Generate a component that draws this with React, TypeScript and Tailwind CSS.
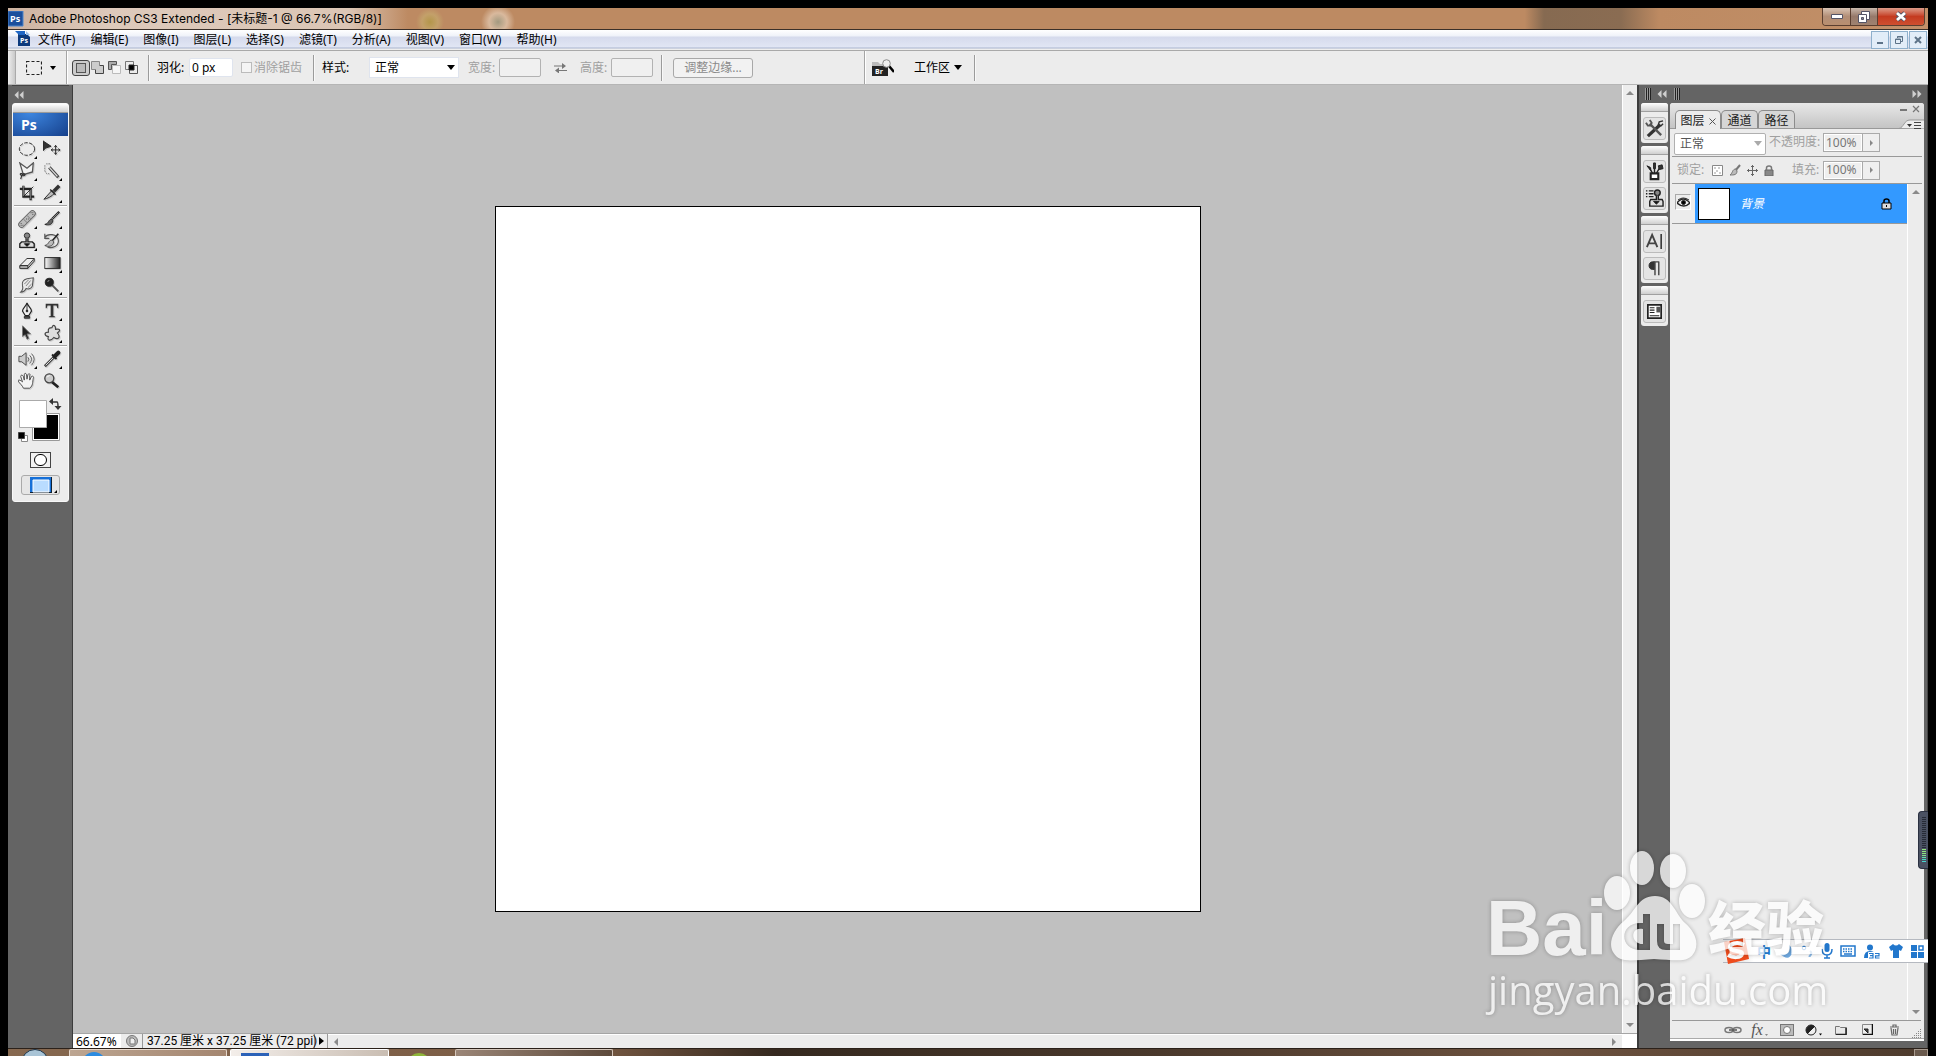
import React from 'react';

const UI_FONT = "font-['Noto_Sans','Noto_Sans_CJK_SC',sans-serif]";

const MENUS = ['文件(F)', '编辑(E)', '图像(I)', '图层(L)', '选择(S)', '滤镜(T)', '分析(A)', '视图(V)', '窗口(W)', '帮助(H)'];

interface IconProps {
  children: React.ReactNode;
  className?: string;
  box?: string;
}

function Icon({ children, className = 'h-5 w-5', box = '0 0 20 20' }: IconProps) {
  return (
    <svg viewBox={box} className={`shrink-0 ${className}`} fill="none" stroke="#222" strokeWidth="1" aria-hidden="true">
      {children}
    </svg>
  );
}

function DoubleArrow({ right = false }: { right?: boolean }) {
  return (
    <Icon box="0 0 10 8" className={right ? 'h-2 w-2.5 rotate-180' : 'h-2 w-2.5'}>
      <path d="M4.500 0v8L0.500 4zM9.500 0v8L5.500 4z" fill="#cfcfcf" stroke="none" />
    </Icon>
  );
}

function Grip() {
  return (
    <span className="flex h-3">
      <i className="w-px bg-[#999]" /><i className="w-px bg-[#222]" />
      <i className="w-px bg-[#999]" /><i className="w-px bg-[#222]" />
      <i className="w-px bg-[#999]" /><i className="w-px bg-[#222]" />
    </span>
  );
}

function Caret({ className = 'text-black' }: { className?: string }) {
  return (
    <svg viewBox="0 0 8 5" className={`h-[5px] w-2 shrink-0 ${className}`} aria-hidden="true">
      <path d="M0 0h8L4 5z" fill="currentColor" />
    </svg>
  );
}

/* ---------- toolbox ---------- */

const TOOL_GROUPS: { name: string; corner?: boolean; art: React.ReactNode }[][] = [
  [
    { name: '椭圆选框工具', corner: true, art: <ellipse cx="10" cy="10" rx="8.500" ry="7" strokeDasharray="4 1.500" /> },
    {
      name: '移动工具',
      art: (
        <>
          <path d="M0 1v11l3-3 6-2z" fill="#333" />
          <path d="M14 6v10M9 11h10M12.500 8L14 6l1.500 2M12.500 14l1.500 2 1.500-2M11 9.500L9 11l2 1.500M17 9.500l2 1.500-2 1.500" />
        </>
      ),
    },
    {
      name: '多边形套索工具',
      corner: true,
      art: (
        <>
          <path d="M2 1l8 6 7-6-1 10-10 3z" fill="#f2f2f2" stroke="#555" strokeWidth="1.400" />
          <path d="M6 14c-3-3-5 0-2 1s5-1 3-2-3 2-4 6" stroke="#333" strokeWidth="1.300" />
        </>
      ),
    },
    {
      name: '快速选择工具',
      corner: true,
      art: (
        <>
          <path d="M8 2H4L2 4v6l2 3h3" strokeDasharray="2 1" stroke="#777" />
          <path d="M7 6l10 11" stroke="#444" strokeWidth="3.500" />
          <path d="M7 6l9 10" stroke="#ddd" strokeWidth="1.500" />
        </>
      ),
    },
    {
      name: '裁剪工具',
      art: (
        <>
          <path d="M6 2v12h12M2 5.500h12V18" strokeWidth="2.500" />
          <path d="M6 2v11.500M14 6v11" stroke="#999" strokeWidth="0.800" />
          <path d="M6 14L17 3" />
        </>
      ),
    },
    {
      name: '切片工具',
      corner: true,
      art: (
        <>
          <path d="M18 2l-6 6" stroke="#333" strokeWidth="4" />
          <path d="M1 17L10 7l3 3c-3 4-8 6-12 7z" fill="#bbb" />
          <path d="M8 6l6 6" strokeWidth="1.500" />
        </>
      ),
    },
  ],
  [
    {
      name: '污点修复画笔工具',
      corner: true,
      art: (
        <>
          <path d="M4 16L16 4" stroke="#666" strokeWidth="7.500" strokeLinecap="round" />
          <path d="M4 16L16 4" stroke="#bbb" strokeWidth="5.500" strokeLinecap="round" />
          <path d="M6 10l4 4M10 6l4 4" stroke="#777" />
          <path d="M3 15h1M5 17h1M14 3h1M16 5h1M9 10h1M11 10h1M3 17h1M16 3h1" stroke="#444" />
        </>
      ),
    },
    {
      name: '画笔工具',
      corner: true,
      art: (
        <>
          <path d="M18 2l-8 8" strokeWidth="2.500" />
          <path d="M17 3l-7 7" stroke="#aaa" strokeWidth="0.800" />
          <path d="M10 10c-4 0-3 5-8 6 4 1 8 1 9-4z" fill="#666" />
        </>
      ),
    },
    {
      name: '仿制图章工具',
      corner: true,
      art: (
        <>
          <circle cx="10" cy="4" r="3" fill="#888" />
          <path d="M9 7v4H4L2 13v4h16v-4l-2-2h-5V7" fill="#ddd" strokeWidth="1.500" />
          <path d="M7 13h6l-3 3z" fill="#111" />
        </>
      ),
    },
    {
      name: '历史记录画笔工具',
      corner: true,
      art: (
        <>
          <path d="M2 2v5h5M2 6c3-5 14-4 15 3s-7 9-12 8" stroke="#555" strokeWidth="1.300" />
          <path d="M17 2l-7 8" strokeWidth="1.800" />
          <path d="M10 9c-4 0-3 5-8 6 4 2 9 1 10-4z" fill="#bbb" stroke="#444" />
        </>
      ),
    },
    {
      name: '橡皮擦工具',
      corner: true,
      art: (
        <>
          <path d="M2 13L10 5h8l-7 8z" fill="#eee" />
          <path d="M2 13v3h9v-3zM11 16l7-8V5" fill="#bbb" />
        </>
      ),
    },
    {
      name: '渐变工具',
      corner: true,
      art: (
        <>
          <defs>
            <linearGradient id="toolGradient">
              <stop offset="0" stopColor="#fff" />
              <stop offset="1" stopColor="#222" />
            </linearGradient>
          </defs>
          <rect x="2" y="4" width="17" height="12" fill="url(#toolGradient)" />
        </>
      ),
    },
    {
      name: '涂抹工具',
      corner: true,
      art: (
        <>
          <path d="M3 18c2-2 3-4 2-7-1-4 1-7 5-8l7-1-1 9c-1 3-4 4-7 3-1 2-3 4-6 4z" fill="#e8e8e8" stroke="#555" strokeWidth="1.200" />
          <path d="M7 9l5-5M9 11l5-6M11 13l4-4" stroke="#777" />
        </>
      ),
    },
    {
      name: '加深工具',
      corner: true,
      art: (
        <>
          <path d="M10 10l7 7" stroke="#555" strokeWidth="2" />
          <circle cx="7" cy="7" r="4.500" fill="#222" />
          <path d="M5 6l2-1" stroke="#aaa" />
        </>
      ),
    },
  ],
  [
    {
      name: '钢笔工具',
      corner: true,
      art: (
        <>
          <path d="M10 1c-1 4-5 6-5 9l3 5h4l3-5c0-3-4-5-5-9z" fill="#eee" strokeWidth="1.300" />
          <path d="M10 2v8" />
          <circle cx="10" cy="10" r="1" fill="#222" />
          <path d="M7 16h6v2H7z" fill="#555" />
        </>
      ),
    },
    {
      name: '横排文字工具',
      corner: true,
      art: <path d="M3 2h14v5h-1l-1-3h-3.500v11.500l2 .5v1h-7v-1l2-.5V4H5L4 7H3z" fill="#333" stroke="none" />,
    },
    {
      name: '路径选择工具',
      corner: true,
      art: <path d="M5 2v12l3-2 2 5 2-1-2-5h4z" fill="#222" stroke="#777" />,
    },
    {
      name: '自定形状工具',
      corner: true,
      art: (
        <path
          d="M10 4c1-4 4-3 4 2 5-1 6 1 2 4 4 5 1 8-4 5-3 4-8 4-6-1-5-1-5-5 0-5-1-5 2-5 4-5z"
          fill="#ddd"
          stroke="#444"
          strokeWidth="1.300"
        />
      ),
    },
  ],
  [
    {
      name: '语音注释工具',
      corner: true,
      art: (
        <>
          <path d="M1 7h3l5-4v14l-5-4H1z" fill="#ccc" stroke="#444" />
          <path d="M11 8q2 2 0 5M13 6q4 4 0 9M15 4q6 6 0 13" stroke="#555" />
        </>
      ),
    },
    {
      name: '吸管工具',
      corner: true,
      art: (
        <>
          <path d="M2 18L12 8" strokeWidth="3" stroke="#444" />
          <path d="M3 17l9-9" stroke="#eee" />
          <path d="M10 5l5 5" strokeWidth="2" />
          <path d="M13 7l4-4" strokeWidth="4.500" strokeLinecap="round" />
        </>
      ),
    },
    {
      name: '抓手工具',
      art: (
        <path
          d="M6 18c-1-3-4-5-6-8 0-2 3-1 5 1L3 5c0-2 2-2 3 0l1 4V3c0-2 2-2 2.500 0L10 8l1-5c1-2 3-1 2 1v5l2-4c1-1 3 0 2 2-1 4 0 8-4 11z"
          fill="#f4f4f4"
          stroke="#444"
        />
      ),
    },
    {
      name: '缩放工具',
      art: (
        <>
          <path d="M10 11l7 6" strokeWidth="3" />
          <circle cx="7" cy="7" r="5" fill="#ccc" stroke="#444" strokeWidth="1.500" />
          <path d="M4.500 6q1-2 3-2" stroke="#fff" />
        </>
      ),
    },
  ],
];

function Corner() {
  return (
    <svg viewBox="0 0 3 3" className="absolute right-0.5 bottom-px h-[3px] w-[3px]" aria-hidden="true">
      <path d="M3 0v3H0z" fill="#000" />
    </svg>
  );
}

function Toolbox() {
  return (
    <aside className="flex w-[65px] shrink-0 flex-col border-r border-[#3c3c3c] bg-[#646464] pr-[3px] pl-1">
      <div className="flex h-[18px] items-center border-t border-[#444] px-0.5"><DoubleArrow /></div>
      <div className="rounded-[3px] border border-[#f8f8f8] bg-[#ececec] pb-1.5">
        <div className="h-[9px] border-b border-[#9a9a9a] bg-linear-to-b from-white to-[#cfcfcf]" />
        <div className="h-[23px] bg-[radial-gradient(ellipse_at_30%_0%,#3d86e0,#16408b)] pl-2 font-['Open_Sans',sans-serif] text-sm leading-[23px] font-bold text-white">Ps</div>
        <div className="flex flex-col px-px pt-0.5">
          {TOOL_GROUPS.map((group, i) => (
            <div key={i}>
              {i > 0 && <div className="my-px h-0.5 border-b border-white bg-[#a3a3a3]" />}
              <div className="grid grid-cols-[25px_25px]">
                {group.map((tool) => (
                  <button key={tool.name} type="button" aria-label={tool.name} className="relative flex h-[22px] items-center justify-center">
                    <Icon className="h-[18px] w-[18px] drop-shadow-[1px_1px_0px_#cccccc]">{tool.art}</Icon>
                    {tool.corner && <Corner />}
                  </button>
                ))}
              </div>
            </div>
          ))}
        </div>
        <svg viewBox="0 0 54 52" className="mt-1.5 h-[52px] w-[54px]" aria-hidden="true">
          <path d="M19.500 15.500h27v27h-27z" fill="#fff" stroke="#999" />
          <path d="M21 17h24v24H21z" fill="#000" />
          <path d="M6.500 2.500h27v27h-27z" fill="#fff" stroke="#aaa" />
          <path d="M39 4h5q1 0 1 5" fill="none" stroke="#333" strokeWidth="1.500" />
          <path d="M40 0v7l-4-3.500zM41.500 8h7L45 12z" fill="#333" />
          <path d="M8.500 37.500h6v6h-6z" fill="#fff" stroke="#888" />
          <path d="M5.500 34.500h6v6h-6z" fill="#000" stroke="#444" />
        </svg>
        <div className="mt-0.5 flex flex-col items-center gap-[7px]">
          <button type="button" aria-label="快速蒙版" className="flex h-4 w-[21px] items-center justify-center border border-[#444] bg-[#f2f2f2]">
            <span className="h-3 w-[13px] rounded-full border border-black bg-white" />
          </button>
          <button type="button" aria-label="屏幕模式" className="relative flex h-5 w-[39px] items-center justify-center rounded-[3px] border border-[#aaa] bg-[#e6e6e6]">
            <Icon box="0 0 22 16" className="h-4 w-[22px]">
              <path d="M0 0h22v16H0z" fill="#1670d8" stroke="none" />
              <path d="M0 15.500h22M21.500 0v16" stroke="#123" />
              <path d="M3 3h16v12H3z" fill="#b9dcff" stroke="#fff" />
            </Icon>
            <Corner />
          </button>
        </div>
      </div>
    </aside>
  );
}

/* ---------- top bars ---------- */

function TitleBar() {
  return (
    <header className="flex h-[22px] shrink-0 border-b border-[#3b3029] bg-[radial-gradient(circle_at_490px_14px,#a39a80_0px,#d9b99d_9px,transparent_17px),radial-gradient(circle_at_422px_14px,#b3964a_0px,#c3a06a_8px,transparent_14px),linear-gradient(90deg,#cdb29f_0px,#ddc9bb_100px,#dcc6b5_340px,#bd8a62_400px,#bd8a62_79%,#866a51_80%,#8a6c52_84%,#bd8a62_86%,#c29069_100%)]">
      <Icon box="0 0 16 16" className="mt-[3px] h-4 w-4">
        <path d="M0 0h15v15H0z" fill="#1b4f9c" stroke="#4d86cd" />
        <text x="2" y="11" fontSize="9" fontWeight="bold" fill="#fff" stroke="none" fontFamily="Open Sans">Ps</text>
      </Icon>
      <h1 className="flex-1 pt-px pl-[5px] font-['Inter','Noto_Sans_CJK_SC',sans-serif] text-[12px] leading-5 text-black">
        Adobe Photoshop CS3 Extended - [未标题-1 @ 66.7%(RGB/8)]
      </h1>
      <div className="mr-[3px] flex h-[18px] overflow-hidden rounded-b-[4px] border border-t-0 border-[#5b3f30] text-white">
        <button type="button" aria-label="最小化" className="flex w-7 items-center justify-center border-r border-[#5b3f30] bg-linear-to-b from-[#d9c4b4] via-[#b28e76] to-[#b98f70]">
          <Icon box="0 0 12 6" className="h-1.5 w-3"><path d="M.5.500h11v4H.5z" fill="#fff" stroke="#556" /></Icon>
        </button>
        <button type="button" aria-label="还原" className="flex w-[27px] items-center justify-center border-r border-[#5b3f30] bg-linear-to-b from-[#c9b8ac] via-[#96796a] to-[#a08370]">
          <Icon box="0 0 12 12" className="h-3 w-3">
            <path d="M3.500.500h8v8h-8z" fill="#fff" stroke="#556" />
            <path d="M.5 3.500h8v8h-8z" fill="#fff" stroke="#556" />
            <path d="M3.500 6.500h2v2h-2z" fill="#889" stroke="#556" />
          </Icon>
        </button>
        <button type="button" aria-label="关闭" className="flex w-[46px] items-center justify-center bg-linear-to-b from-[#dc9a88] via-[#c43a20] to-[#cf5030]">
          <Icon box="0 0 12 11" className="h-[11px] w-3">
            <path d="M2 2l8 7M10 2l-8 7" stroke="#556" strokeWidth="4.500" />
            <path d="M2 2l8 7M10 2l-8 7" stroke="#fff" strokeWidth="2.800" />
          </Icon>
        </button>
      </div>
    </header>
  );
}

function MenuBar() {
  const mdi = 'flex h-[18px] w-[18px] items-center justify-center border border-[#8fb0cc] bg-[#e2edf8]';
  return (
    <nav className="flex h-[21px] shrink-0 items-start border-b border-[#a9a9a9] bg-[linear-gradient(#ffffff_0px,#eff2f9_6px,#d5daec_7px,#e1e6f4_17px,#a9b4ce_18px,#eeeeee_19px)]">
      <Icon box="0 0 16 16" className="mt-px ml-[7px] h-4 w-4">
        <path d="M3 3h9l3 3v9H3z" fill="#0d3a7c" stroke="none" />
        <path d="M0 0h10v4H4z" fill="#1f66c4" stroke="none" />
        <path d="M11 0l4 4h-4z" fill="#9cc0ea" stroke="none" />
        <text x="5" y="12" fontSize="7" fontWeight="bold" fill="#fff" stroke="none" fontFamily="Open Sans">Ps</text>
      </Icon>
      <div className="flex flex-1 gap-[15px] pt-px pl-[7px]">
        {MENUS.map((menu) => (
          <button key={menu} type="button" className="text-[12px] leading-[18px] whitespace-nowrap text-black">{menu}</button>
        ))}
      </div>
      <div className="mt-px mr-px flex gap-px">
        <button type="button" aria-label="最小化文档" className={mdi}><span className="mt-1.5 h-0.5 w-1.5 bg-[#5d7388]" /></button>
        <button type="button" aria-label="还原文档" className={mdi}>
          <Icon box="0 0 8 8" className="h-2 w-2"><path d="M2.500 2V.500h5v5H6M.5 3h5v4.500h-5z" stroke="#5d7388" /><path d="M2 1h6M0 3.500h6" stroke="#5d7388" /></Icon>
        </button>
        <button type="button" aria-label="关闭文档" className={mdi}>
          <Icon box="0 0 8 8" className="h-2 w-2"><path d="M1 1l6 6M7 1L1 7" stroke="#5d7388" strokeWidth="2" /></Icon>
        </button>
      </div>
    </nav>
  );
}

function Divider() {
  return <span className="h-[26px] w-0.5 shrink-0 border-l border-[#9b9b9b] bg-[#f8f8f8]" />;
}

function OptionsBar() {
  return (
    <section className="flex h-[34px] shrink-0 items-center border-b border-[#b5b5b5] bg-[#ececec] text-[12px] text-black">
      <span className="h-full w-2 border-r border-[#aaa] bg-linear-to-r from-[#eee] to-[#c9c9c9]" />
      <button type="button" aria-label="矩形选框工具" className="ml-2.5 flex items-center gap-2">
        <Icon box="0 0 16 14" className="h-[14px] w-4"><path d="M.5.500h15v13H.5z" strokeDasharray="3 2" strokeWidth="1.200" /></Icon>
        <svg viewBox="0 0 6 4" className="h-1 w-1.5" aria-hidden="true"><path d="M0 0h6L3 4z" /></svg>
      </button>
      <span className="ml-2.5 h-full w-0.5 border-l border-[#a5a5a5] bg-white" />
      <button type="button" aria-label="新选区" className="mr-px ml-1 flex h-4 w-[18px] items-center justify-center rounded-[3px] border border-[#444] bg-[#ccc]">
        <span className="h-2.5 w-2.5 border border-[#555] bg-[#bbb]" />
      </button>
      <div className="flex items-center gap-1">
        <button type="button" aria-label="添加到选区">
          <Icon box="0 0 13 13" className="h-[13px] w-[13px]"><path d="M4.500 4.500h8v8h-8z" fill="#ccc" stroke="#444" /><path d="M.5.500h8v8h-8z" fill="#ccc" stroke="#888" /><path d="M5 5h4v4H5z" fill="#ccc" stroke="none" /></Icon>
        </button>
        <button type="button" aria-label="从选区减去">
          <Icon box="0 0 13 13" className="h-[13px] w-[13px]"><path d="M.5.500h8v3h-5v5h-3z" fill="#aaa" stroke="#555" /><path d="M4.500 4.500h8v8h-8z" fill="#f6f6f6" stroke="#bbb" /></Icon>
        </button>
        <button type="button" aria-label="与选区交叉">
          <Icon box="0 0 13 13" className="h-[13px] w-[13px]"><path d="M.5.500h8v8h-8z" stroke="#777" /><path d="M4.500 4.500h8v8h-8z" stroke="#555" /><path d="M4 4h5v5H4z" fill="#000" /></Icon>
        </button>
      </div>
      <span className="w-2.5" />
      <Divider />
      <label htmlFor="feather" className="ml-[7px] w-8">羽化:</label>
      <input id="feather" defaultValue="0 px" className="h-[19px] w-11 rounded-[2px] border border-[#dfe4ee] bg-white px-0.5 text-[12px]" />
      <input id="antialias" type="checkbox" disabled className="ml-2 h-[11px] w-[11px] appearance-none border border-[#bbb] bg-[#f4f4f4]" />
      <label htmlFor="antialias" className="ml-0.5 w-[49px] whitespace-nowrap text-[#a0a0a0]">消除锯齿</label>
      <span className="w-2.5" />
      <Divider />
      <label htmlFor="style" className="ml-[7px] w-[47px]">样式:</label>
      <span className="relative">
        <select id="style" className="h-[21px] w-[90px] appearance-none border border-[#dfe4ee] bg-white px-[5px] text-[12px]">
          <option>正常</option>
        </select>
        <span className="pointer-events-none absolute top-2 right-1"><Caret /></span>
      </span>
      <label htmlFor="optWidth" className="ml-[9px] w-[31px] text-[#a0a0a0]">宽度:</label>
      <input id="optWidth" disabled className="h-[19px] w-[42px] rounded-[2px] border border-[#b2b2b2] bg-[#f0f0f0]" />
      <button type="button" aria-label="高度和宽度互换" className="mx-[13px]">
        <Icon box="0 0 13 10" className="h-2.5 w-[13px]"><path d="M0 3h9M4 7.500h9" stroke="#777" strokeWidth="1.200" /><path d="M8 0v6l4-3zM5 4.500v6l-4-3z" fill="#777" stroke="none" /></Icon>
      </button>
      <label htmlFor="optHeight" className="w-[31px] text-[#a0a0a0]">高度:</label>
      <input id="optHeight" disabled className="h-[19px] w-[42px] rounded-[2px] border border-[#b2b2b2] bg-[#f0f0f0]" />
      <span className="w-2" />
      <Divider />
      <button type="button" className="ml-2.5 h-5 w-20 rounded-[3px] border border-[#a8a8a8] bg-[#f2f2f2] leading-4 text-[#8a8a8a]">调整边缘...</button>
      <span className="ml-[111px] h-full w-0.5 border-l border-[#a5a5a5] bg-white" />
      <button type="button" aria-label="转到 Bridge" className="ml-1.5">
        <Icon box="0 0 22 18" className="h-[18px] w-[22px]">
          <path d="M0 3h6l2 2h8v3H0z" fill="#bbb" stroke="none" />
          <path d="M0 7h16v10H0z" fill="#222" stroke="none" />
          <text x="3" y="15" fontSize="7" fontWeight="bold" fill="#fff" stroke="none" fontFamily="Open Sans">Br</text>
          <path d="M17 7l5 6" strokeWidth="2.500" stroke="#000" />
          <circle cx="14.500" cy="4.500" r="3.800" fill="#eee" stroke="#888" />
        </Icon>
      </button>
      <button type="button" className="mr-3 ml-5 flex items-center gap-1">工作区<Caret /></button>
      <Divider />
    </section>
  );
}

/* ---------- document ---------- */

function SmallArrow({ dir }: { dir: 'up' | 'down' | 'left' | 'right' }) {
  const paths = { up: 'M0 6l4-4 4 4z', down: 'M0 2l4 4 4-4z', left: 'M6 0L2 4l4 4z', right: 'M2 0l4 4-4 4z' };
  return (
    <svg viewBox="0 0 8 8" className="h-2 w-2 shrink-0" aria-hidden="true">
      <path d={paths[dir]} fill="#8a8a8a" />
    </svg>
  );
}

function DocumentArea() {
  return (
    <main className="flex min-w-0 flex-1 flex-col">
      <div className="flex min-h-0 flex-1">
        <div className="flex min-w-0 flex-1 items-center justify-center bg-[#c0c0c0]">
          <div className="aspect-square h-[706px] border border-black bg-white" />
        </div>
        <div className="flex w-[15px] flex-col items-center justify-between border-l border-white bg-[#ededed] py-1">
          <SmallArrow dir="up" />
          <SmallArrow dir="down" />
        </div>
      </div>
      <div className="flex h-[15px] shrink-0 border-t border-[#a5a5a5] bg-[#ececec] text-[12px] leading-[15px] text-black">
        <input aria-label="缩放比例" defaultValue="66.67%" className="w-12 bg-white pl-[3px] text-[12px]" />
        <span className="flex w-[22px] items-center justify-center border-r border-[#999]">
          <Icon box="0 0 12 12" className="h-3 w-3"><circle cx="6" cy="6" r="5.500" fill="#bbb" stroke="#777" /><path d="M4 3h3l2 2v4H4z" fill="#eee" stroke="#777" /></Icon>
        </span>
        <span className="w-[172px] border-r border-[#999] pl-1 font-['Roboto','Noto_Sans_CJK_SC',sans-serif] text-[12px] whitespace-nowrap">
          37.25 厘米 x 37.25 厘米 (72 ppi)
        </span>
        <button type="button" aria-label="状态栏选项" className="flex w-[13px] items-center justify-center border-r border-[#999]">
          <svg viewBox="0 0 5 8" className="h-2 w-[5px]" aria-hidden="true"><path d="M0 0l5 4-5 4z" /></svg>
        </button>
        <span className="flex flex-1 items-center justify-between border-t border-white px-1">
          <SmallArrow dir="left" />
          <SmallArrow dir="right" />
        </span>
        <span className="w-[15px] bg-white" />
      </div>
    </main>
  );
}

/* ---------- right dock ---------- */

const DOCK_GROUPS: { name: string; art: React.ReactNode }[][] = [
  [
    {
      name: '工具预设',
      art: (
        <>
          <path d="M3 18L16 6" strokeWidth="3.500" stroke="#333" />
          <path d="M19 2l-4 1-1 3 3 1 2-2" strokeWidth="1.500" stroke="#333" />
          <path d="M5 5l12 12" stroke="#555" strokeWidth="2.500" />
          <path d="M1 4l2 3h3l1-3-2-3" stroke="#555" strokeWidth="2" />
        </>
      ),
    },
  ],
  [
    {
      name: '画笔',
      art: (
        <>
          <path d="M6 12h8v6H6z" fill="#fff" strokeWidth="2.200" />
          <path d="M8 12L4 5M10 12V5M12 12l4-7" strokeWidth="1.500" />
          <path d="M2 4l4 2v3zM9 1h2v6H9zM14 4l4-1 1 4-4 1z" fill="#333" />
        </>
      ),
    },
    {
      name: '仿制源',
      art: (
        <>
          <circle cx="13" cy="4" r="3" fill="#888" strokeWidth="1.500" />
          <path d="M12 7v4H6l-1 2v5h14v-5l-1-2h-4V7" fill="#ddd" strokeWidth="1.500" />
          <path d="M9 13h6l-3 3z" fill="#111" />
          <path d="M1 2h1.500M4 2h5M1 5h1.500M4 5h5M1 8h1.500M4 8h5" strokeWidth="1.500" />
        </>
      ),
    },
  ],
  [
    {
      name: '字符',
      art: (
        <>
          <path d="M2 16L7.500 3 13 16M4 12h7" strokeWidth="2" stroke="#444" />
          <path d="M17 2v16" strokeWidth="1.500" />
        </>
      ),
    },
    {
      name: '段落',
      art: (
        <>
          <path d="M10 3H8C3 3 3 11 8 11h2z" fill="#333" stroke="#333" />
          <path d="M9 3h6M10.500 3v14M14.500 3v14" strokeWidth="1.500" stroke="#444" />
        </>
      ),
    },
  ],
  [
    {
      name: '图层复合',
      art: (
        <>
          <path d="M3 3h14v14H3z" fill="#fff" strokeWidth="1.800" />
          <path d="M5 6h5M5 8.500h5M5 11h5M5 14.500h10" strokeWidth="1.200" />
          <path d="M12 5h4v6h-4z" fill="#555" stroke="none" />
        </>
      ),
    },
  ],
];

function Dock() {
  return (
    <aside className="w-[33px] shrink-0 border-l-2 border-[#3c3c3c] bg-[#646464] px-0.5">
      <div className="flex h-[18px] items-center gap-1.5 pl-1"><Grip /><DoubleArrow /></div>
      <div className="flex flex-col gap-[3px]">
        {DOCK_GROUPS.map((group, i) => (
          <div key={i} className="rounded-[3px] bg-[#ececec] pb-[3px]">
            <div className="h-[9px] rounded-t-[3px] border-b border-[#a0a0a0] bg-linear-to-b from-white to-[#cfcfcf]" />
            <div className="flex flex-col items-center gap-1 pt-[5px]">
              {group.map((item) => (
                <button key={item.name} type="button" aria-label={item.name} className="flex h-[23px] w-[23px] items-center justify-center rounded-[3px] border border-[#bbb] bg-[#e4e4e4]">
                  <Icon className="h-[19px] w-[19px]">{item.art}</Icon>
                </button>
              ))}
            </div>
          </div>
        ))}
      </div>
    </aside>
  );
}

function PercentField({ id }: { id: string }) {
  return (
    <span className="flex h-[19px] w-[57px] border border-[#aaa] bg-[#efefef]">
      <input id={id} defaultValue="100%" className="w-[38px] border border-white pl-px text-[12px] text-[#777]" />
      <button type="button" aria-label="调整数值" className="flex flex-1 items-center justify-center border-l border-[#aaa]">
        <svg viewBox="0 0 3 6" className="h-1.5 w-[3px]" aria-hidden="true"><path d="M0 0l3 3-3 3z" fill="#888" /></svg>
      </button>
    </span>
  );
}

function LayersPanel() {
  const tab = 'flex h-[18px] items-center justify-center rounded-t-[5px] border border-b-0 border-[#8c8c8c] pt-0.5 text-[12px] text-[#222]';
  const action = 'flex w-[27px] items-center justify-center';
  return (
    <aside className="flex w-[258px] shrink-0 flex-col border-r border-[#444] bg-[#646464] pr-[3px] pb-[7px] text-[12px]">
      <div className="flex h-[18px] items-center justify-between pr-0.5 pl-1"><Grip /><DoubleArrow right /></div>
      <div className="flex min-h-0 flex-1 flex-col rounded-t-[3px] bg-[#ececec]">
        <div className="flex h-[26px] shrink-0 items-end rounded-t-[3px] border-b border-[#999] bg-linear-to-b from-[#e8e8e8] to-[#c4c4c4] pl-[5px]">
          <button type="button" className={`${tab} -mb-px h-[19px] w-[46px] gap-1 bg-[#ececec]`}>
            图层
            <Icon box="0 0 7 7" className="h-[7px] w-[7px]"><path d="M.5.500l6 6M6.500.500l-6 6" stroke="#555" /></Icon>
          </button>
          <button type="button" className={`${tab} w-[37px] bg-[#d6d6d6]`}>通道</button>
          <button type="button" className={`${tab} w-[37px] bg-[#d6d6d6]`}>路径</button>
          <svg viewBox="0 0 34 26" className="-mb-px ml-auto h-[26px] w-[34px]" aria-hidden="true">
            <path d="M9 25.500c5-1 5-8.500 11-8.500h15v9z" fill="#ececec" stroke="#999" />
            <path d="M5 25.500h4" stroke="#999" />
            <path d="M10 7h7" stroke="#777" strokeWidth="2" />
            <path d="M23 3l6 6M29 3l-6 6" stroke="#777" strokeWidth="1.200" />
            <path d="M17 21h5l-2.500 3z" fill="#333" />
            <path d="M24 19.500h7M24 22.500h7M24 25.500h7" stroke="#444" />
          </svg>
        </div>
        <div className="mx-0.5 flex h-7 shrink-0 items-start border-b border-[#999] pt-1">
          <span className="relative mr-[3px] ml-0.5">
            <select aria-label="混合模式" className="h-[22px] w-[92px] appearance-none rounded-[2px] border border-[#b0b0b0] bg-white px-[5px] text-[12px] text-[#555]">
              <option>正常</option>
            </select>
            <span className="pointer-events-none absolute top-2 right-1"><Caret className="text-[#aaa]" /></span>
          </span>
          <label htmlFor="opacity" className="w-[54px] whitespace-nowrap text-[#a0a0a0]">不透明度:</label>
          <PercentField id="opacity" />
        </div>
        <div className="mx-0.5 flex h-[27px] shrink-0 items-center border-b border-[#999] pl-[5px]">
          <span className="w-[35px] text-[#a0a0a0]">锁定:</span>
          <div className="flex w-20 items-center gap-1.5">
            <button type="button" aria-label="锁定透明像素">
              <Icon box="0 0 11 11" className="h-[11px] w-[11px]"><path d="M.5.500h10v10H.5z" fill="#fff" stroke="#888" /><path d="M2 2h2v2H2zM6 2h2v2H6zM4 5h2v2H4zM2 7h2v2H2zM7 7h2v2H7z" fill="#ccc" stroke="none" /></Icon>
            </button>
            <button type="button" aria-label="锁定图像像素">
              <Icon box="0 0 12 12" className="h-3 w-3"><path d="M11 1L6 7" stroke="#777" strokeWidth="2" /><path d="M7 5c-4 0-3 4-6 6 4 0 7 0 7-4z" fill="#bbb" stroke="#777" /></Icon>
            </button>
            <button type="button" aria-label="锁定位置">
              <Icon box="0 0 11 11" className="h-[11px] w-[11px]"><path d="M5.500 0v11M0 5.500h11M4 2l1.500-1.500L7 2M4 9l1.500 1.500L7 9M2 4L.500 5.500 2 7M9 4l1.500 1.500L9 7" stroke="#666" /></Icon>
            </button>
            <button type="button" aria-label="锁定全部">
              <Icon box="0 0 10 11" className="h-[11px] w-2.5"><path d="M1 5h8v6H1z" fill="#888" stroke="#666" /><path d="M2.500 5V3q0-2 2.500-2t2.500 2v2" stroke="#777" strokeWidth="1.500" /></Icon>
            </button>
          </div>
          <label htmlFor="fill" className="w-[31px] text-[#a0a0a0]">填充:</label>
          <PercentField id="fill" />
        </div>
        <div className="ml-0.5 flex min-h-0 flex-1">
          <ul className="min-w-0 flex-1">
            <li className="flex h-10 border-b border-[#999]">
              <button type="button" aria-label="图层可见性" className="mt-2.5 mr-1 ml-[3px] flex h-4 w-4 items-center justify-center border border-[#aaa] border-r-white border-b-white">
                <Icon box="0 0 13 10" className="h-2.5 w-[13px]"><path d="M0 6q6-8 13 0-6 6-13 0z" fill="#eee" strokeWidth="1.500" /><circle cx="6.500" cy="5.500" r="2" fill="#000" /><path d="M1 3q5-4 11 0" /></Icon>
              </button>
              <div className="flex flex-1 items-center bg-[#3399ff] pr-[15px] pl-[3px] text-white">
                <span className="h-8 w-8 border border-black bg-white" />
                <span className="flex-1 pl-2.5 italic">背景</span>
                <Icon box="0 0 11 12" className="h-3 w-[11px]"><path d="M1 5h9v6H1z" fill="#ddd" stroke="#000" /><path d="M3 5V3q0-2 2.500-2T8 3v2" stroke="#000" strokeWidth="1.500" /><path d="M5.500 7v2" stroke="#000" /></Icon>
              </div>
            </li>
          </ul>
          <div className="flex w-[17px] flex-col items-center justify-between border-l border-white py-1"><SmallArrow dir="up" /><SmallArrow dir="down" /></div>
        </div>
        <div className="mr-[3px] ml-0.5 flex h-[18px] shrink-0 items-center justify-end border-t border-[#999] text-[#555]">
          <button type="button" aria-label="链接图层" className={action}>
            <Icon box="0 0 18 8" className="h-2 w-[18px]"><ellipse cx="5" cy="4" rx="4" ry="2.500" stroke="#777" strokeWidth="1.500" /><ellipse cx="13" cy="4" rx="4" ry="2.500" stroke="#777" strokeWidth="1.500" /><path d="M5 4h8" stroke="#555" strokeWidth="1.500" /></Icon>
          </button>
          <button type="button" className={`${action} items-end font-['Liberation_Serif',serif] text-[16px] leading-4 italic`}>
            fx
            <Icon box="0 0 3 2" className="mb-0.5 ml-0.5 h-0.5 w-[3px]"><path d="M0 0h3L1.500 2z" fill="#888" stroke="none" /></Icon>
          </button>
          <button type="button" aria-label="添加蒙版" className={action}>
            <span className="flex h-3 w-3.5 items-center justify-center border border-[#777] bg-[#bbb]"><span className="h-2 w-2 rounded-full border border-[#777] bg-white" /></span>
          </button>
          <button type="button" aria-label="调整图层" className={action}>
            <Icon box="0 0 17 12" className="h-3 w-[17px]"><circle cx="6" cy="6" r="5" fill="#eee" /><path d="M2.500 9.500A5 5 0 0 1 9.500 2.500z" fill="#222" /><path d="M14 9.500h3l-1.500 2z" fill="#000" stroke="none" /></Icon>
          </button>
          <button type="button" aria-label="新建组" className={action}>
            <Icon box="0 0 12 10" className="h-2.5 w-3"><path d="M.5 1.500h4l1 1h6v7H.5z" fill="#e8e8e8" stroke="#777" /><path d="M11 3v6.500H1" strokeWidth="1.500" /></Icon>
          </button>
          <button type="button" aria-label="新建图层" className={action}>
            <Icon box="0 0 11 11" className="h-[11px] w-[11px]"><path d="M.5.500h10v10H.5z" fill="#eee" stroke="#888" /><path d="M10.500 0v10.500H1" stroke="#111" strokeWidth="1.500" /><path d="M2 5h4v4z" fill="#444" stroke="#222" /></Icon>
          </button>
          <button type="button" aria-label="删除图层" className={action}>
            <Icon box="0 0 11 12" className="h-3 w-[11px]"><path d="M1 3h9M4 3V1h3v2M2 4l1 7h5l1-7M4.500 5v5M6.500 5v5" stroke="#666" strokeWidth="1.200" /></Icon>
          </button>
          <svg viewBox="0 0 9 10" className="mt-1.5 ml-1 h-2.5 w-[9px]" aria-hidden="true"><path d="M0 9.500h9M2 7.500h7M4 5.500h5M6 3.500h3M8 1.500h1" stroke="#888" strokeDasharray="1 1" /></svg>
        </div>
        <div className="h-[3px] shrink-0 border-t border-[#aaa] bg-white" />
      </div>
    </aside>
  );
}

/* ---------- floating items ---------- */

function Watermark() {
  return (
    <div className="pointer-events-none absolute right-[102px] bottom-[35px] h-[172px] w-[348px] text-white opacity-75 drop-shadow-[0_0_2px_rgba(0,0,0,0.35)]">
      <div className="absolute top-[35px] left-0 font-['Liberation_Sans',sans-serif] text-[78px] leading-[88px] font-bold">Bai</div>
      <svg viewBox="0 0 102 110" className="absolute top-0.5 left-[118px] h-[110px] w-[102px]" aria-hidden="true">
        <g fill="#fff">
          <ellipse cx="13" cy="42" rx="13" ry="17" />
          <ellipse cx="38" cy="17" rx="12" ry="17" />
          <ellipse cx="69" cy="20" rx="13" ry="17" />
          <ellipse cx="88" cy="50" rx="13" ry="17" />
          <path
            fillRule="evenodd"
            d="M51 45c-17 0-19 15-31 25-11 9-16 22-11 31 7 12 19 8 41 7 22 1 35 5 41-8 4-10-1-20-10-28C70 61 68 45 51 45zM39 63h7v36H36c-21 0-21-27 0-27h3zM39 78c-13-3-13 15 0 15zM53 73h7v17q0 3 4 3h5V73h7v26H62q-9 0-9-9z"
          />
        </g>
      </svg>
      <div className="absolute top-[42px] left-[222px] font-['Noto_Sans_CJK_SC',sans-serif] text-[58px] leading-[68px] font-black">经验</div>
      <div className="absolute top-[117px] left-0.5 font-['Open_Sans',sans-serif] text-[40px] leading-[48px]">jingyan.baidu.com</div>
    </div>
  );
}

function InputMethodBar() {
  return (
    <div className="absolute right-2 bottom-[93px] flex h-6 w-[205px] items-center justify-between border-y border-[#b5b9c0] bg-linear-to-r from-transparent from-10% to-white to-15% pr-1 text-[#2277cc]">
      <Icon box="0 0 26 26" className="h-[26px] w-[26px]">
        <path d="M1 4l21-4 4 21-21 5z" fill="#ee4c1d" stroke="none" />
        <path d="M21 7C14 3 6 6 7 10s13 2 12 6-9 4-14 1" stroke="#fff" strokeWidth="4" />
      </Icon>
      <span className="text-[14px] font-bold">中</span>
      <Icon box="0 0 14 14" className="h-3.5 w-3.5"><path d="M10 1q3 11-9 9 9 8 12-1 1-5-3-8z" fill="#6ea8e0" stroke="none" /></Icon>
      <Icon box="0 0 12 12" className="h-3 w-3"><circle cx="3" cy="3" r="1.800" stroke="#2277cc" /><path d="M9 6q3 2-1 6" stroke="#8bb9e6" strokeWidth="2" /></Icon>
      <Icon box="0 0 12 16" className="h-4 w-3"><rect x="3.500" y="0" width="5" height="9" rx="2.500" fill="#2277cc" stroke="none" /><path d="M1 6q0 6 5 6t5-6M6 12v3M3 15h6" stroke="#2277cc" strokeWidth="1.500" /></Icon>
      <Icon box="0 0 16 12" className="h-3 w-4"><path d="M1 1h14v10H1z" stroke="#2277cc" strokeWidth="1.500" /><path d="M3 4h10M3 6.500h10" stroke="#2277cc" strokeWidth="1.500" strokeDasharray="1.500 1" /><path d="M4 9h8" stroke="#2277cc" strokeWidth="1.500" /></Icon>
      <Icon box="0 0 17 15" className="h-[15px] w-[17px]">
        <circle cx="6" cy="3.500" r="3" fill="#2277cc" stroke="none" />
        <path d="M0 14q0-7 6-7 4 0 5 3v4z" fill="#2277cc" stroke="none" />
        <path d="M4.500 8.500h12v6h-12z" fill="#fff" stroke="#fff" />
        <path d="M5 9.500h4v4.500H5M6 11.700h3M15.500 14H11.500v-2.200h3.500V9.500h-4" stroke="#2277cc" strokeWidth="1.200" />
      </Icon>
      <Icon box="0 0 14 14" className="h-3.5 w-3.5"><path d="M4 0q3 3 6 0l4 3-2 4-2-1v8H4V6L2 7 0 3z" fill="#2277cc" stroke="none" /></Icon>
      <Icon box="0 0 13 13" className="h-[13px] w-[13px]"><path d="M0 0h6v6H0zM0 7h6v6H0zM7 7h6v6H7z" fill="#2277cc" stroke="none" /><path d="M8 1h4v4H8z" stroke="#2277cc" strokeWidth="1.500" /></Icon>
    </div>
  );
}

const METER_LIT = ['#8fe67c', '#8fe67c', '#8fe67c', '#7fe08c', '#62dcae', '#48d6bf', '#48d6d0'];

function LevelMeter() {
  return (
    <div className="absolute right-2 bottom-[187px] flex h-[58px] w-2.5 flex-col items-center justify-end gap-px rounded-l-[4px] border border-r-0 border-[#2a3040] bg-[#4a5162] pb-1.5">
      {Array.from({ length: 16 }, (_, i) => <i key={i} className="h-px w-1 bg-[#262b36]" />)}
      {METER_LIT.map((color, i) => <i key={i} className="h-px w-1" style={{ background: color }} />)}
    </div>
  );
}

function Taskbar() {
  return (
    <footer className="flex h-2 shrink-0 overflow-hidden border-t border-[#2b211a] bg-[linear-gradient(90deg,#86684f_0%,#7b5c45_30%,#35291f_40%,#4a392c_60%,#6d523f_80%,#4d3b2d_100%)]">
      <span className="w-[61px] pl-[13px]"><span className="block h-7 w-7 rounded-full border border-[#1b3348] bg-[#a9c4d6]" /></span>
      <span className="h-full w-[158px] rounded-t-[2px] border border-b-0 border-[#e7d9cd] bg-linear-to-r from-[#bca591] to-[#a48670] pl-3">
        <span className="mt-0.5 block h-6 w-6 rounded-full bg-[#2b8be0]" />
      </span>
      <span className="ml-[3px] h-full w-[159px] rounded-t-[2px] border border-b-0 border-white bg-linear-to-r from-[#f3eeea] to-[#c9bdb2] pl-2.5">
        <span className="mt-[3px] block h-2 w-7 bg-[#2c62b8]" />
      </span>
      <span className="w-[66px] pt-1 pl-[18px]"><span className="block h-6 w-6 rounded-full bg-[#8fb63a]" /></span>
      <span className="h-full w-[158px] rounded-t-[2px] border border-b-0 border-[#d4c6ba] bg-linear-to-r from-[#9b8677] to-[#5d4a3c]" />
      <span className="ml-auto w-3.5 border border-b-0 border-[#a89a8e] bg-[#6a5a4d]" />
    </footer>
  );
}

export default function App() {
  return (
    <div className={`relative flex h-screen flex-col overflow-hidden bg-black px-2 pt-2 ${UI_FONT}`}>
      <TitleBar />
      <MenuBar />
      <OptionsBar />
      <div className="flex min-h-0 flex-1">
        <Toolbox />
        <DocumentArea />
        <Dock />
        <LayersPanel />
      </div>
      <Taskbar />
      <InputMethodBar />
      <Watermark />
      <LevelMeter />
    </div>
  );
}
